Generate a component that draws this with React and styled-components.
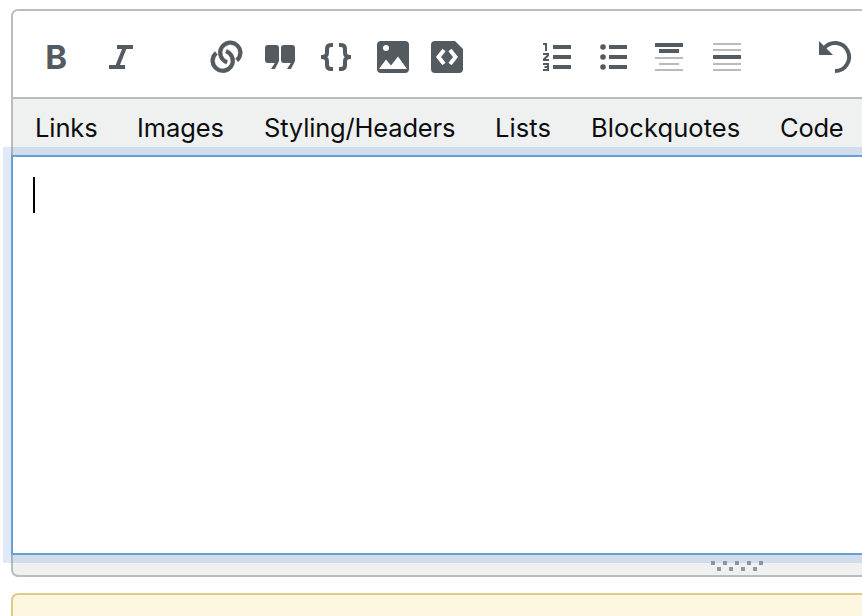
import React from "react";
import styled, { createGlobalStyle } from "styled-components";

const GlobalStyle = createGlobalStyle`
  *, *::before, *::after { box-sizing: border-box; }
  html, body { margin: 0; background: #fff; overflow: hidden; }
`;

const Page = styled.main`
  height: 616px;
  width: 100%;
  padding: 9px 0 0 11px;
  overflow: hidden;
  font-family: Inter, "Liberation Sans", sans-serif;
  color: #0c0d0e;
`;

const Editor = styled.section`
  display: flex;
  flex-direction: column;
  width: 1320px;
  height: 568px;
  border: 2px solid #babcbf;
  border-radius: 7px;
  background: #eff1f1;
`;

const Toolbar = styled.div`
  display: flex;
  flex: none;
  height: 88px;
  padding: 26px 0 0 23px;
  background: #fff;
  border-bottom: 2px solid #babdbd;
  border-radius: 5px 5px 0 0;
`;

const ToolButton = styled.button`
  flex: none;
  width: 40px;
  height: 40px;
  margin: 0 0 0 ${(p) => p.$space}px;
  padding: 0;
  border: 0;
  background: none;
  color: #535a60;
`;

const Icon = styled.svg`
  display: block;
  width: 40px;
  height: 40px;
  overflow: visible;
  fill: currentColor;
`;

const BoldLetter = styled.text`
  font: 700 33px Inter, sans-serif;
`;

const HelpBar = styled.nav`
  display: flex;
  flex: none;
  height: 56px;
  padding: 13px 0 0 22px;
`;

const HelpLink = styled.a`
  flex: none;
  width: ${(p) => p.$width}px;
  font-size: 25.5px;
  line-height: 32px;
  letter-spacing: ${(p) => p.$tracking}px;
  white-space: nowrap;
`;

const TextArea = styled.div`
  flex: none;
  height: 400px;
  margin-left: -2px;
  padding: 20px;
  background: #fff;
  border: 2px solid #64a1d3;
  box-shadow: 0 0 0 8px rgba(60, 120, 205, 0.16);
`;

const Caret = styled.div`
  width: 2px;
  height: 36px;
  background: #000;
`;

const Grip = styled.div`
  display: grid;
  gap: 2px;
  padding: 6px 0 0 698px;
`;

const GripRow = styled.div`
  display: flex;
  gap: 8px;
  padding-left: ${(p) => p.$indent}px;
`;

const GripDot = styled.span`
  width: 4px;
  height: 4px;
  background: ${(p) => p.$color};
`;

const Notice = styled.aside`
  width: 1320px;
  height: 80px;
  margin-top: 16px;
  border: 2px solid #dfcb83;
  border-radius: 7px;
  background: #fdf6e0;
`;

const tools = [
  { name: "Bold", space: 0, art: <BoldLetter x="9.3" y="32">B</BoldLetter> },
  {
    name: "Italic",
    space: 25,
    art: <path d="M16 10H32M8 30H24M24 10L16 30" fill="none" stroke="currentColor" strokeWidth="4" />,
  },
  {
    name: "Link",
    space: 66,
    art: (
      <path
        transform="translate(1.7 1.7) scale(2)"
        stroke="currentColor"
        strokeWidth="0.25"
        d="M7.22 11.83a6 6 0 0 0 1.62.85l.61-1.8a4.1 4.1 0 1 1 4.04-.8l1.26 1.42a6 6 0 1 0-7.53.33m3.43-5.6a6 6 0 0 0-1.6-.87L8.4 7.15a4.1 4.1 0 1 1-4.05.73L3.12 6.43a6 6 0 1 0 7.53-.2"
      />
    ),
  },
  {
    name: "Quote",
    space: 13,
    art: (
      <path d="M8 8h8q3 0 3 3v13L15 32h-4l3.8-6H8q-3 0-3-3V11q0-3 3-3Zm16 0h8q3 0 3 3v13L31 32h-4l3.8-6H24q-3 0-3-3V11q0-3 3-3Z" />
    ),
  },
  {
    name: "Code",
    space: 16,
    art: (
      <path
        d="M17 8h-2q-4 0-4 4v4q0 4-6 4q6 0 6 4v4q0 4 4 4h2M23 8h2q4 0 4 4v4q0 4 6 4q-6 0-6 4v4q0 4-4 4h-2"
        fill="none"
        stroke="currentColor"
        strokeWidth="4"
      />
    ),
  },
  {
    name: "Image",
    space: 17,
    art: (
      <path
        fillRule="evenodd"
        d="M8 4h24q4 0 4 4v24q0 4-4 4H8q-4 0-4-4V8q0-4 4-4ZM13 8a3 3 0 1 0 0 6a3 3 0 1 0 0-6ZM6 32h28L25 19.5l-7 9l-5-6Z"
      />
    ),
  },
  {
    name: "Snippet",
    space: 14,
    art: (
      <>
        <path d="M8 4h20l8 8v20q0 4-4 4H8q-4 0-4-4V8q0-4 4-4Z" />
        <path d="M17 13L11.5 20L17 27M23 13L28.5 20L23 27" fill="none" stroke="#fff" strokeWidth="4" />
      </>
    ),
  },
  {
    name: "Numbered list",
    space: 70,
    art: (
      <>
        <path d="M16 8h18v4H16ZM16 18h18v4H16ZM16 28h18v4H16Z" />
        <path
          d="M6 7h3v7M6 17h5v1.5L7 22.2V23h5M6 27h5v6H6M7.5 30H11"
          fill="none"
          stroke="currentColor"
          strokeWidth="2"
        />
      </>
    ),
  },
  {
    name: "Bulleted list",
    space: 17,
    art: (
      <>
        <path d="M15 8h18v4H15ZM15 18h18v4H15ZM15 28h18v4H15Z" />
        <circle cx="9" cy="10" r="2.8" />
        <circle cx="9" cy="20" r="2.8" />
        <circle cx="9" cy="30" r="2.8" />
      </>
    ),
  },
  {
    name: "Heading",
    space: 15,
    art: (
      <>
        <path d="M6 6h28v4H6ZM10 12h20v4H10Z" />
        <path d="M6 20h28v2H6ZM10 26h20v2H10ZM6 32h28v2H6Z" fill="#bbb" />
      </>
    ),
  },
  {
    name: "Horizontal rule",
    space: 18,
    art: (
      <>
        <path d="M6 18h28v4H6Z" />
        <path d="M6 6h28v2H6ZM6 12h28v2H6ZM6 26h28v2H6ZM6 32h28v2H6Z" fill="#bbb" />
      </>
    ),
  },
  {
    name: "Undo",
    space: 68,
    art: (
      <>
        <path d="M4 4v14h14Z" />
        <path d="M9 11.4A14 14 0 1 1 20 34" fill="none" stroke="currentColor" strokeWidth="4" />
      </>
    ),
  },
];

const helpLinks = [
  { label: "Links", width: 102, tracking: -0.1 },
  { label: "Images", width: 127, tracking: -0.08 },
  { label: "Styling/Headers", width: 231, tracking: -0.17 },
  { label: "Lists", width: 96, tracking: 0.1 },
  { label: "Blockquotes", width: 189, tracking: 0.07 },
  { label: "Code", width: 100, tracking: -0.25 },
];

const topDots = [0, 1, 2, 3, 4];
const bottomDots = [0, 1, 2, 3];

export default function App() {
  return (
    <Page>
      <GlobalStyle />
      <Editor>
        <Toolbar>
          {tools.map((t) => (
            <ToolButton key={t.name} $space={t.space} aria-label={t.name}>
              <Icon viewBox="0 0 40 40">{t.art}</Icon>
            </ToolButton>
          ))}
        </Toolbar>
        <HelpBar>
          {helpLinks.map((l) => (
            <HelpLink key={l.label} $width={l.width} $tracking={l.tracking}>
              {l.label}
            </HelpLink>
          ))}
        </HelpBar>
        <TextArea>
          <Caret />
        </TextArea>
        <Grip>
          <GripRow $indent={0}>
            {topDots.map((d) => (
              <GripDot key={d} $color="#8796a2" />
            ))}
          </GripRow>
          <GripRow $indent={6}>
            {bottomDots.map((d) => (
              <GripDot key={d} $color="#979797" />
            ))}
          </GripRow>
        </Grip>
      </Editor>
      <Notice />
    </Page>
  );
}
